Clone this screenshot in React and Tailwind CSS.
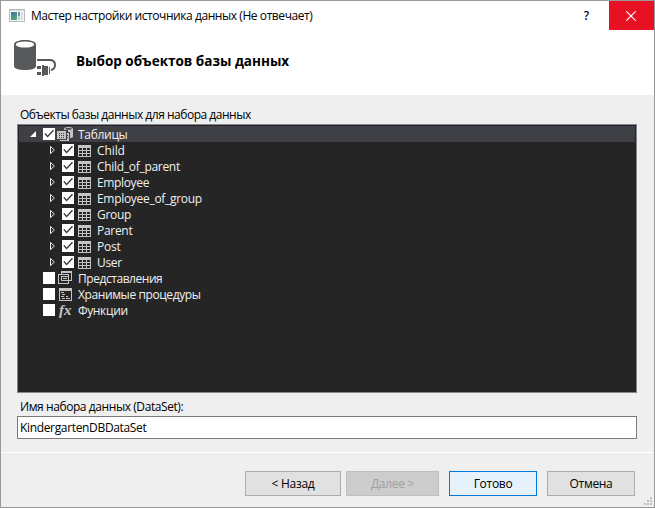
import React from "react";

const tables = [
  ["Child", "tracking-[-0.1px]"],
  ["Child_of_parent", "tracking-[-0.3px]"],
  ["Employee", "tracking-[-0.35px]"],
  ["Employee_of_group", "tracking-[-0.3px]"],
  ["Group", "tracking-[-0.3px]"],
  ["Parent", "tracking-[-0.3px]"],
  ["Post", "tracking-[-0.2px]"],
  ["User", "tracking-[-0.3px]"],
];

function AppIcon() {
  return (
    <svg width="16" height="14" viewBox="0 0 16 14" className="shrink-0">
      <defs>
        <linearGradient id="pane" x1="0" y1="0" x2="0.5" y2="1">
          <stop offset="0" stopColor="#3f70a8" />
          <stop offset="1" stopColor="#4fa878" />
        </linearGradient>
      </defs>
      <rect x="0.5" y="0.5" width="15" height="12" fill="#f4f5f6" stroke="#b4bac0" />
      <path d="M1 1.5H15" stroke="#d5dade" />
      <rect x="2" y="3" width="6" height="8" fill="url(#pane)" />
      <rect x="9" y="3" width="2" height="4" fill="#6f8fa3" />
      <rect x="9" y="7" width="2" height="4" fill="#c3cdd5" />
      <rect x="12" y="3" width="2" height="8" fill="#d9dde1" />
    </svg>
  );
}

function DatabaseIcon() {
  return (
    <svg width="43" height="37" viewBox="0 0 43 37" className="shrink-0">
      <path d="M0 4.5C0 1.6 5 0 11 0S22 1.6 22 4.5V26C22 28.6 17 30 11 30S0 28.6 0 26Z" fill="#58595b" />
      <ellipse cx="11" cy="4.5" rx="9.2" ry="3.1" fill="#fff" />
      <path d="M23 20H35.5C39 20 41 21.8 41 24.8C41 27.8 39.5 29.6 37 30" fill="none" stroke="#58595b" strokeWidth="2" />
      <path d="M23 26H27V29H23ZM23 32H27V35H23ZM28 25H30V26H34V35H30V36H28ZM35 27H36V34H35Z" fill="#58595b" />
    </svg>
  );
}

function Check({ on }) {
  return (
    <svg width="12" height="12" viewBox="0 0 12 12" className="shrink-0">
      <rect width="12" height="12" fill="#fff" />
      {on && <path d="M1.8 5.4L4.6 8.5L10.5 2.3" fill="none" stroke="#3a3a3d" strokeWidth="1.35" />}
    </svg>
  );
}

function Collapsed() {
  return (
    <svg width="5" height="10" viewBox="0 0 5 10" className="shrink-0">
      <path d="M0.5 1.4V8.6L4.3 5Z" fill="none" stroke="#f1f1f1" strokeWidth="1" />
    </svg>
  );
}

function TableIcon() {
  return (
    <svg width="13" height="14" viewBox="0 0 13 14" className="shrink-0" shapeRendering="crispEdges">
      <path d="M0 2H13V14H0Z" fill="#c5c5c5" />
      <path d="M1 5H4V7H1ZM5 5H8V7H5ZM9 5H12V7H9ZM1 8H4V10H1ZM5 8H8V10H5ZM9 8H12V10H9ZM1 11H4V13H1ZM5 11H8V13H5ZM9 11H12V13H9Z" fill="#252526" />
    </svg>
  );
}

function TablesIcon() {
  return (
    <svg width="16" height="16" viewBox="0 0 16 16" className="shrink-0">
      <path d="M7 3C7 1.7 8.7 1 11.5 1S16 1.7 16 3V10.5C16 11.6 14.5 12 12 12H7Z" fill="#c5c5c5" />
      <ellipse cx="11.5" cy="2.8" rx="3.4" ry="0.9" fill="#3f3f46" />
      <g shapeRendering="crispEdges">
        <path d="M5 4H11V6H13V13H11V15H5Z" fill="#3f3f46" />
        <path d="M3 7H12V15H3Z" fill="#c5c5c5" />
        <path d="M0 4H10V14H0Z" fill="#3f3f46" />
        <path d="M0 5H9V13H0Z" fill="#c5c5c5" />
        <path d="M2 7H3V8H2ZM4 7H5V8H4ZM6 7H7V8H6ZM2 9H3V10H2ZM4 9H5V10H4ZM6 9H7V10H6ZM2 11H3V12H2ZM4 11H5V12H4ZM6 11H7V12H6ZM10 9H11V10H10ZM10 11H11V12H10Z" fill="#3f3f46" />
      </g>
    </svg>
  );
}

function ViewsIcon() {
  return (
    <svg width="14" height="14" viewBox="0 0 14 14" className="shrink-0" shapeRendering="crispEdges" fill="none" stroke="#c5c5c5">
      <path d="M3.5 3V0.5H13.5V9.5H11" />
      <path d="M3 1.5H13" />
      <path d="M0.5 3.5H10.5V12.5H0.5Z" />
      <path d="M3.5 5.5H11M3.5 5V9.5H10M5 7.5H9" />
    </svg>
  );
}

function ProceduresIcon() {
  return (
    <svg width="13" height="14" viewBox="0 0 13 14" className="shrink-0" shapeRendering="crispEdges">
      <path d="M0 1H13V14H0Z" fill="#c5c5c5" />
      <path d="M1 4H12V13H1Z" fill="#252526" />
      <path d="M2 5H5V6H2ZM3 7H6V8H3ZM2 9H5V10H2ZM7 9H9V10H7ZM3 11H6V12H3ZM7 11H11V12H7Z" fill="#c5c5c5" />
    </svg>
  );
}

function Button({ className, children }) {
  return (
    <button className={"h-[25px] shrink-0 border pt-px text-center leading-none tracking-[-0.3px] " + className}>{children}</button>
  );
}

export default function App() {
  return (
    <div className="relative flex h-[508px] w-[655px] flex-col overflow-hidden border border-[#999] bg-[#efefef] font-['Open_Sans','Noto_Sans',sans-serif] text-[12px] leading-4 text-black">
      <header className="h-[94px] shrink-0 bg-white">
        <div className="flex h-[29px] items-center pl-2">
          <AppIcon />
          <span className="ml-[6px] grow whitespace-nowrap tracking-[-0.43px]">
            Мастер настройки источника данных (Не отвечает)
          </span>
          <span className="mr-[20px] font-['Noto_Sans',sans-serif] text-[12px] font-medium">?</span>
          <button className="flex h-[29px] w-[45px] items-center justify-center bg-[#e81123] pr-px">
            <svg width="10" height="10" viewBox="0 0 10 10">
              <path d="M0.3 0.3L9.7 9.7M9.7 0.3L0.3 9.7" stroke="#fff" strokeWidth="1.1" />
            </svg>
          </button>
        </div>
        <div className="flex pl-[13px] pt-[10px]">
          <DatabaseIcon />
          <h1 className="ml-[19px] mt-[11px] whitespace-nowrap text-[13.5px] font-bold leading-5">Выбор объектов базы данных</h1>
        </div>
      </header>

      <main className="flex h-[358px] shrink-0 flex-col border-b border-white pl-4 pr-[17px] pt-3">
        <div className="h-[17px] pl-[3px] tracking-[-0.48px]">Объекты базы данных для набора данных</div>
        <div className="h-[269px] shrink-0 border border-[#828790] bg-[#252526] p-px text-[#f1f1f1]">
          <div className="flex h-4 items-center bg-[#3f3f46] pl-[11px]">
            <svg width="6" height="6" viewBox="0 0 6 6" className="mr-[7px] shrink-0">
              <path d="M6 0V6H0Z" fill="#fff" />
            </svg>
            <Check on />
            <span className="ml-[2px] flex w-[21px]"><TablesIcon /></span>
            <span className="pt-[2px] tracking-[-0.3px]">Таблицы</span>
          </div>
          {tables.map(([name, tracking]) => (
            <div key={name} className="flex h-4 items-center pl-[31px]">
              <Collapsed />
              <span className="ml-[7px] mr-[4px] flex"><Check on /></span>
              <TableIcon />
              <span className={"ml-[6px] pt-[2px] " + tracking}>{name}</span>
            </div>
          ))}
          <div className="flex h-4 items-center pl-[24px]">
            <Check />
            <span className="ml-[3px] flex w-[20px]"><ViewsIcon /></span>
            <span className="pt-[2px] tracking-[-0.45px]">Представления</span>
          </div>
          <div className="flex h-4 items-center pl-[24px]">
            <Check />
            <span className="ml-[4px] flex w-[19px]"><ProceduresIcon /></span>
            <span className="pt-[2px] tracking-[-0.4px]">Хранимые процедуры</span>
          </div>
          <div className="flex h-4 items-center pl-[24px]">
            <Check />
            <span className="ml-[4px] w-[19px] font-['Liberation_Serif',serif] text-[15px] font-bold italic leading-3 text-[#c5c5c5]">fx</span>
            <span className="pt-[2px] tracking-[-0.35px]">Функции</span>
          </div>
        </div>
        <div className="mt-[6px] h-4 pl-[3px] tracking-[-0.42px]">Имя набора данных (DataSet):</div>
        <input
          readOnly
          value="KindergartenDBDataSet"
          className="mt-px h-[23px] w-full shrink-0 border border-[#7a7a7a] bg-white pb-px pl-[2px] tracking-[-0.34px] outline-none"
        />
      </main>

      <footer className="flex pl-[244px] pt-[18px]">
        <Button className="w-[96px] border-[#adadad] bg-[#e1e1e1]">&lt; Назад</Button>
        <Button className="ml-[5px] w-[93px] border-[#bfbfbf] bg-[#ccc] text-[#a0a0a0]">Далее &gt;</Button>
        <Button className="ml-[10px] w-[88px] border-[#0078d7] bg-[#e5f1fb]">Готово</Button>
        <Button className="ml-[10px] w-[88px] border-[#adadad] bg-[#e1e1e1]">Отмена</Button>
      </footer>
      <svg width="8" height="8" viewBox="0 0 8 8" className="absolute bottom-[2px] right-[2px]" fill="#bfbfbf">
        <path d="M6 0H8V2H6ZM3 3H5V5H3ZM6 3H8V5H6ZM0 6H2V8H0ZM3 6H5V8H3ZM6 6H8V8H6Z" />
      </svg>
    </div>
  );
}
